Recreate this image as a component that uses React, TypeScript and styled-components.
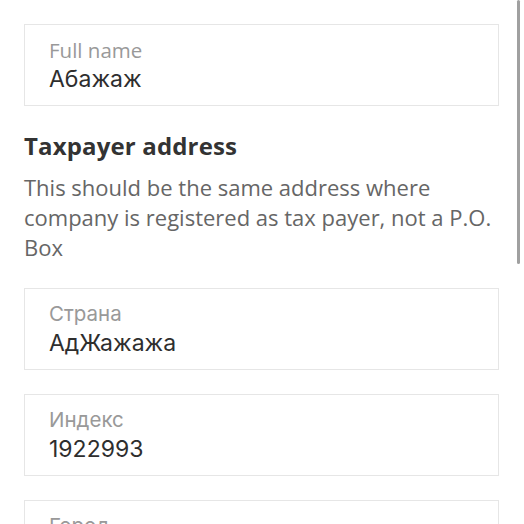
import React from "react";
import styled, { createGlobalStyle } from "styled-components";

const Global = createGlobalStyle`
  html, body { margin: 0; padding: 0; background: #ffffff; }
  body { font-family: "Open Sans", sans-serif; -webkit-font-smoothing: antialiased; }
  #root { height: 524px; overflow: hidden; }
`;

const Page = styled.div`
  position: relative;
  height: 524px;
  overflow: hidden;
  padding: 24px 25px 0 24px;
  box-sizing: border-box;
  display: flex;
  flex-direction: column;
`;

const Field = styled.div<{ $gap?: number }>`
  border: 1px solid #e6e6e6;
  padding: 11px 24px 10px;
  display: flex;
  flex-direction: column;
  flex-shrink: 0;
  margin-bottom: ${(p) => p.$gap ?? 24}px;
`;

const Label = styled.div`
  font-family: "Open Sans", sans-serif;
  font-size: 20.5px;
  line-height: 28px;
  color: #999999;
  &:lang(ru) { font-family: Inter, "Open Sans", sans-serif; font-size: 20.5px; }
`;

const Value = styled.div`
  font-family: Inter, "Open Sans", sans-serif;
  font-size: 23px;
  line-height: 31px;
  color: #2e2e2e;
`;

const Heading = styled.h2`
  margin: 0 0 10px;
  font-family: "Open Sans", sans-serif;
  font-weight: 700;
  font-size: 24px;
  letter-spacing: 0.15px;
  line-height: 32px;
  color: #333333;
`;

const Note = styled.p`
  margin: 0 0 26px;
  font-family: "Open Sans", sans-serif;
  font-size: 22px;
  line-height: 30px;
  color: #666666;
`;

const Section = styled.section`
  display: flex;
  flex-direction: column;
`;

const ScrollIndicator = styled.div`
  position: absolute;
  top: 0;
  right: 4px;
  width: 3px;
  height: 264px;
  border-radius: 2px;
  background: #a0a0a0;
`;

type F = { label: string; value?: string; ru?: boolean };

const fields: F[] = [
  { label: "Страна", value: "АдЖажажа", ru: true },
  { label: "Индекс", value: "1922993", ru: true },
  { label: "Город", value: "", ru: true },
];

export default function App() {
  return (
    <>
      <Global />
      <Page>
        <Field $gap={24}>
          <Label>Full name</Label>
          <Value lang="ru">Абажаж</Value>
        </Field>
        <Section>
          <Heading>Taxpayer address</Heading>
          <Note>
            This should be the same address where company is registered as tax payer, not a P.O. Box
          </Note>
        </Section>
        {fields.map((f) => (
          <Field key={f.label}>
            <Label lang={f.ru ? "ru" : "en"}>{f.label}</Label>
            <Value lang="ru">{f.value || "\u00a0"}</Value>
          </Field>
        ))}
        <ScrollIndicator />
      </Page>
    </>
  );
}
